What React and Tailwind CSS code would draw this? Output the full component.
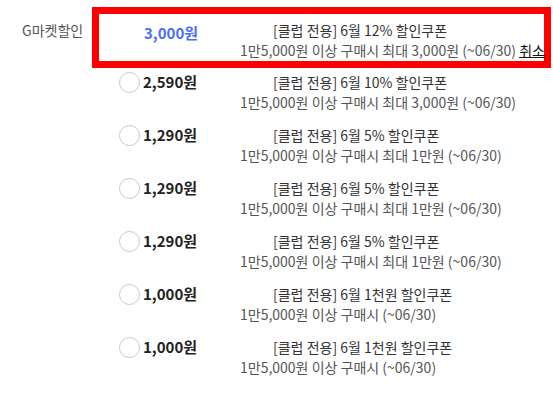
import React from "react";

const coupons = [
  { price: "3,000원", title: "[클럽 전용] 6월 12% 할인쿠폰", desc: "1만5,000원 이상 구매시 최대 3,000원 (~06/30)", selected: true },
  { price: "2,590원", title: "[클럽 전용] 6월 10% 할인쿠폰", desc: "1만5,000원 이상 구매시 최대 3,000원 (~06/30)" },
  { price: "1,290원", title: "[클럽 전용] 6월 5% 할인쿠폰", desc: "1만5,000원 이상 구매시 최대 1만원 (~06/30)" },
  { price: "1,290원", title: "[클럽 전용] 6월 5% 할인쿠폰", desc: "1만5,000원 이상 구매시 최대 1만원 (~06/30)" },
  { price: "1,290원", title: "[클럽 전용] 6월 5% 할인쿠폰", desc: "1만5,000원 이상 구매시 최대 1만원 (~06/30)" },
  { price: "1,000원", title: "[클럽 전용] 6월 1천원 할인쿠폰", desc: "1만5,000원 이상 구매시 (~06/30)" },
  { price: "1,000원", title: "[클럽 전용] 6월 1천원 할인쿠폰", desc: "1만5,000원 이상 구매시 (~06/30)" },
];

function CouponRow({ coupon }) {
  if (coupon.selected) {
    return (
      <div className="border-[7px] border-[#ff0000] pt-[6px] pb-[1px] flex">
        <div className="w-[141px] shrink-0 pl-[45px]">
          <span className="text-[15px] leading-[20px] font-bold text-[#4a6cf7]">{coupon.price}</span>
        </div>
        <div className="text-[14px] leading-[20px] whitespace-nowrap">
          <div className="pl-[33px] text-[#333]">{coupon.title}</div>
          <div className="text-[#555]">
            {coupon.desc} <span className="text-[#111] underline">취소</span>
          </div>
        </div>
      </div>
    );
  }
  return (
    <div className="h-[53px] px-[7px] pt-[4px] flex">
      <div className="w-[141px] shrink-0 pl-[20px] flex items-start gap-[3px]">
        <span className="w-[21px] h-[21px] rounded-full border border-[#c8c8c8] bg-white"></span>
        <span className="text-[15px] leading-[20px] font-bold text-[#222]">{coupon.price}</span>
      </div>
      <div className="text-[14px] leading-[20px] whitespace-nowrap">
        <div className="pl-[33px] text-[#333]">{coupon.title}</div>
        <div className="text-[#555]">{coupon.desc}</div>
      </div>
    </div>
  );
}

export default function App() {
  return (
    <div
      className="w-[553px] h-[407px] bg-white flex pt-[7px] overflow-hidden"
      style={{ fontFamily: '"Noto Sans CJK KR", "Noto Sans", sans-serif' }}
    >
      <div className="w-[92px] shrink-0 pl-[22px] pt-[13px] text-[14px] leading-[20px] text-[#555]">
        G마켓할인
      </div>
      <div className="w-[459px] flex flex-col">
        {coupons.map((c, i) => (
          <CouponRow key={i} coupon={c} />
        ))}
      </div>
    </div>
  );
}
